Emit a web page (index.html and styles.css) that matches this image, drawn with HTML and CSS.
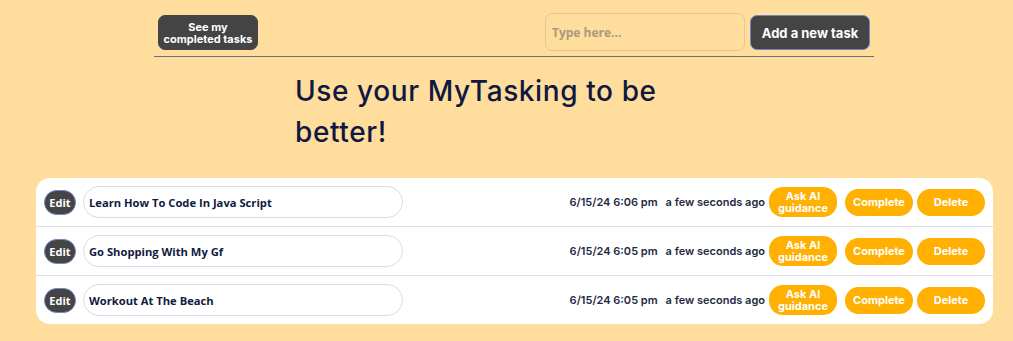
FILE: index.html
```html
<!DOCTYPE html>
<html lang="en">
<head>
    <meta charset="utf-8">
    <title>MyTasking</title>
    <meta name="viewport" content="width=device-width,initial-scale=1.0">
    <link rel="stylesheet" href="styles.css">
</head>
<body>
    <header class="top">
        <button class="btn-dark btn-completed">See my<br>completed tasks</button>
        <form class="add-form">
            <input class="new-task" type="text" placeholder="Type here...">
            <button class="btn-dark btn-add" type="button">Add a new task</button>
        </form>
    </header>
    <h1 class="title">Use your MyTasking to be better!</h1>
    <ul class="tasks">
        <li class="task">
            <button class="btn-edit">Edit</button>
            <input class="task-name" type="text" value="Learn How To Code In Java Script" readonly>
            <span class="task-date">6/15/24 6:06 pm</span>
            <span class="task-ago">a few seconds ago</span>
            <button class="btn-orange btn-ai">Ask AI<br>guidance</button>
            <button class="btn-orange btn-complete">Complete</button>
            <button class="btn-orange btn-delete">Delete</button>
        </li>
        <li class="task">
            <button class="btn-edit">Edit</button>
            <input class="task-name" type="text" value="Go Shopping With My Gf" readonly>
            <span class="task-date">6/15/24 6:05 pm</span>
            <span class="task-ago">a few seconds ago</span>
            <button class="btn-orange btn-ai">Ask AI<br>guidance</button>
            <button class="btn-orange btn-complete">Complete</button>
            <button class="btn-orange btn-delete">Delete</button>
        </li>
        <li class="task">
            <button class="btn-edit">Edit</button>
            <input class="task-name" type="text" value="Workout At The Beach" readonly>
            <span class="task-date">6/15/24 6:05 pm</span>
            <span class="task-ago">a few seconds ago</span>
            <button class="btn-orange btn-ai">Ask AI<br>guidance</button>
            <button class="btn-orange btn-complete">Complete</button>
            <button class="btn-orange btn-delete">Delete</button>
        </li>
    </ul>
</body>
</html>
```

FILE: styles.css
```css
body {
    margin: 0;
    padding: 13px 20px 0 36px;
    background: #ffdd9c;
    font-family: Inter, "Liberation Sans", sans-serif;
}

button {
    font-family: Inter, "Liberation Sans", sans-serif;
    cursor: pointer;
}

.top {
    width: 720px;
    margin: 0 0 0 118px;
    padding: 0 4px 5px 4px;
    box-sizing: border-box;
    border-bottom: 1px solid #6b7080;
    display: flex;
    justify-content: space-between;
    align-items: flex-start;
}

.btn-dark {
    background: #444444;
    color: white;
    font-weight: 700;
    border: 1px solid #444444;
    border-radius: 7px;
}

.btn-completed {
    margin-top: 2px;
    width: 100px;
    height: 35px;
    font-size: 11px;
    line-height: 12px;
    padding: 0;
}

.add-form {
    display: flex;
    gap: 5px;
    align-items: flex-start;
}

.new-task {
    width: 200px;
    height: 38px;
    box-sizing: border-box;
    background: #ffdd9c;
    border: 1px solid #e4c88e;
    border-radius: 7px;
    padding: 0 6px;
    font-family: "Open Sans", sans-serif;
    font-weight: 700;
    font-size: 12px;
    outline: none;
}

.new-task::placeholder {
    color: #a89a7c;
}

.btn-add {
    margin-top: 2px;
    width: 120px;
    height: 35px;
    font-size: 13px;
    border-color: #6f86c8;
}

.title {
    width: 423px;
    margin: 14px 0 25px 259px;
    font-size: 28px;
    font-weight: 500;
    line-height: 41px;
    color: #0f1840;
    letter-spacing: 0.6px;
}

.tasks {
    list-style-type: none;
    margin: 0;
    padding: 0;
    width: 957px;
    background: white;
    border-radius: 14px;
}

.task {
    display: flex;
    align-items: center;
    height: 48px;
    padding: 0 8px;
    border-bottom: 1px solid #dcdfe7;
}

.task:last-child {
    border-bottom: none;
}

.btn-edit {
    width: 32px;
    height: 25px;
    padding: 0;
    background: #444444;
    color: white;
    border: 1px solid #6f86c8;
    border-radius: 13px;
    font-family: "Open Sans", sans-serif;
    font-weight: 700;
    font-size: 11px;
}

.task-name {
    margin-left: 7px;
    width: 320px;
    height: 32px;
    box-sizing: border-box;
    border: 1px solid #d8dce6;
    border-radius: 16px;
    padding: 0 5px;
    font-family: "Open Sans", sans-serif;
    font-weight: 700;
    font-size: 11.2px;
    color: #101a40;
    outline: none;
}

.task-date {
    margin-left: auto;
    font-size: 11px;
    font-weight: 600;
    color: #1f2a44;
}

.task-ago {
    margin-left: 8px;
    font-size: 11px;
    font-weight: 600;
    color: #1f2a44;
}

.btn-orange {
    background: #ffb000;
    color: white;
    border: none;
    font-weight: 700;
    font-size: 11px;
    padding: 0;
    border-radius: 14px;
}

.btn-ai {
    margin-left: 4px;
    width: 68px;
    height: 30px;
    line-height: 12px;
}

.btn-complete {
    margin-left: 8px;
    width: 68px;
    height: 27px;
}

.btn-delete {
    margin-left: 4px;
    width: 68px;
    height: 27px;
}
```
